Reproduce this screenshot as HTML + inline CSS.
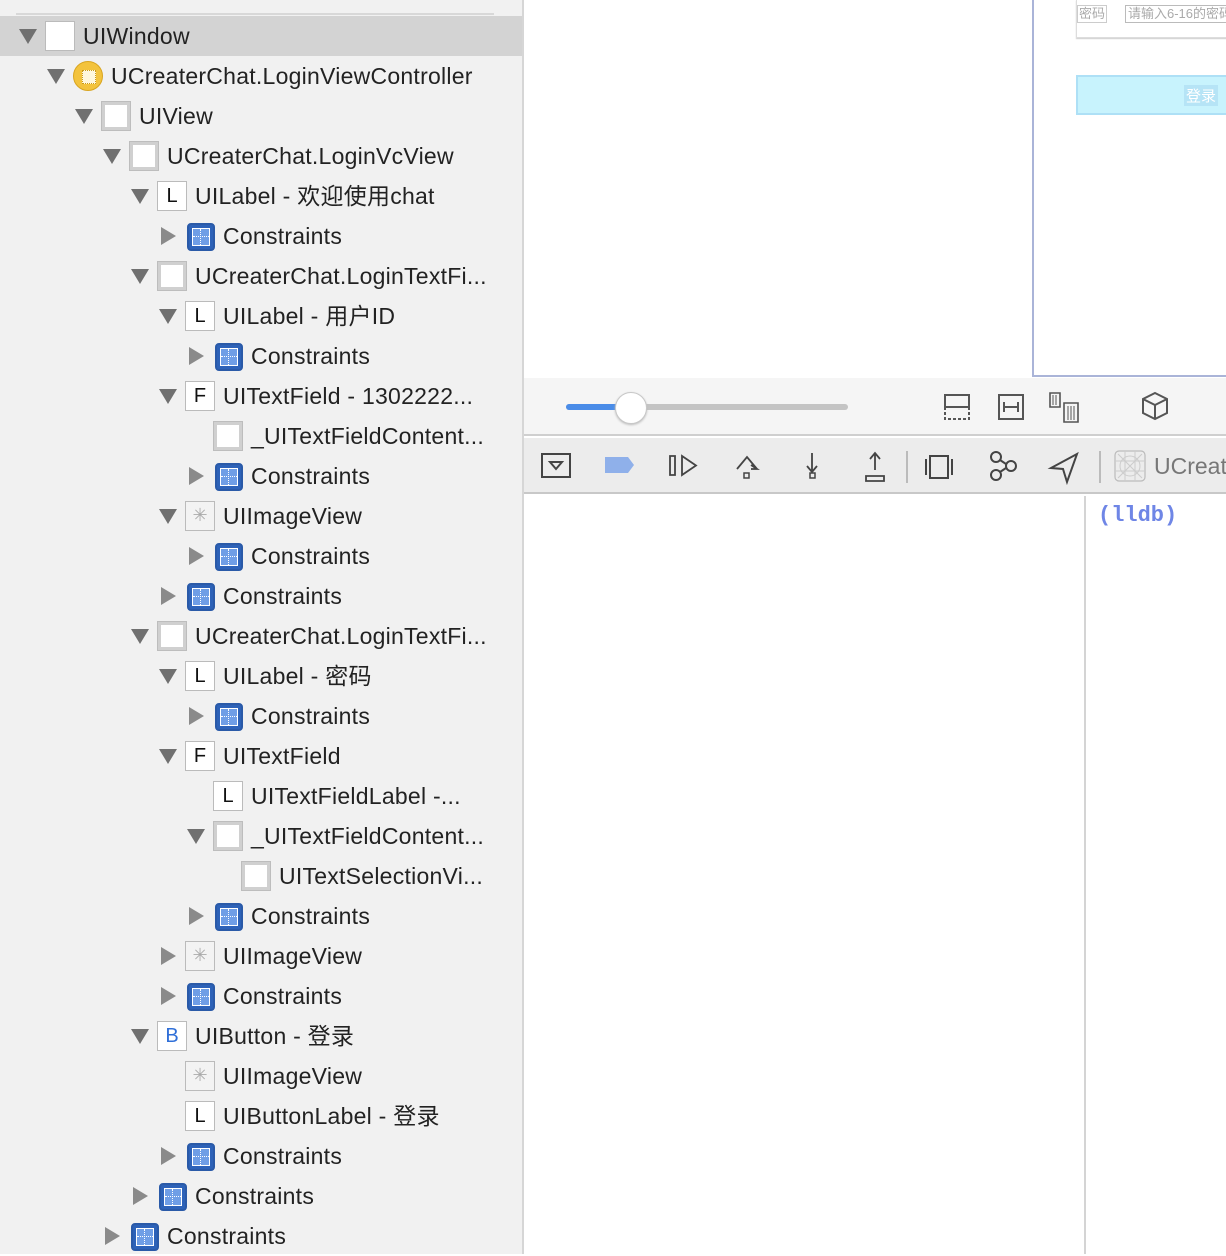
<!DOCTYPE html>
<html><head><meta charset="utf-8"><style>
*{margin:0;padding:0;box-sizing:border-box}
body{width:1226px;height:1254px;overflow:hidden;background:#fff;position:relative;font-family:"Liberation Sans","Noto Sans CJK SC",sans-serif}
#left{position:absolute;left:0;top:0;height:1254px;background:#f1f1f1;border-right:2px solid #d6d6d6;width:524px}
.topline{position:absolute;left:16px;top:13px;width:478px;height:2px;background:#d8d8d8}
.sel{position:absolute;left:0;top:16px;width:522px;height:40px;background:#d3d3d3}
.r{position:absolute;height:40px;font-size:23px;letter-spacing:0.25px;color:#222;white-space:nowrap}
.r .t{position:absolute;left:0;top:12px;width:0;height:0}
.r .t.d{left:-9px;border-left:9px solid transparent;border-right:9px solid transparent;border-top:15px solid #707070;top:13px}
.r .t.rt{left:-7px;top:11px;border-top:9px solid transparent;border-bottom:9px solid transparent;border-left:15px solid #8a8a8a}
.r .i{position:absolute;left:17px;top:5px;width:30px;height:30px;letter-spacing:0}
.r .x{position:absolute;left:55px;top:7px;line-height:26px}
.box{background:#fff;border:1px solid #bbb}
.vw{background:#fff;border:4px solid #d0d0d0;outline:1px solid #bdbdbd;outline-offset:-1px}
.lt{background:#fff;border:1px solid #bbb;font-size:20px;text-align:center;line-height:28px;color:#111}
.cn{left:19px!important;top:7px!important;width:28px!important;height:28px!important;background:#2d62b8;border-radius:4px;border:2px solid #2a5aa8}
.cn:before{content:"";position:absolute;left:3px;top:3px;right:3px;bottom:3px;background:#6f9ee6;border:1px solid #fff}
.cn:after{content:"";position:absolute;left:11px;top:4px;width:0;height:16px;border-left:1px dotted #fff}
.cn i{position:absolute;left:4px;top:11px;width:16px;border-top:1px dotted #fff}
.im{background:#f3f3f3;border:1px solid #bbb;color:#aaa;font-size:18px;text-align:center;line-height:26px}
.vc{background:#f3c33d;border-radius:50%;border:1px solid #d9a520}
.vc:after{content:"";position:absolute;left:8px;top:8px;width:12px;height:12px;background:#fff7dc;border:1px dotted #c99a1a}
#right{position:absolute;left:524px;top:0;width:702px;height:1254px}
</style></head><body>
<div id="left">
<div class="topline"></div>
<div class="sel"></div>

<div class="r" style="left:28px;top:16px"><div class="t d"></div><div class="i box"></div><div class="x">UIWindow</div></div>
<div class="r" style="left:56px;top:56px"><div class="t d"></div><div class="i vc"></div><div class="x">UCreaterChat.LoginViewController</div></div>
<div class="r" style="left:84px;top:96px"><div class="t d"></div><div class="i vw"></div><div class="x">UIView</div></div>
<div class="r" style="left:112px;top:136px"><div class="t d"></div><div class="i vw"></div><div class="x">UCreaterChat.LoginVcView</div></div>
<div class="r" style="left:140px;top:176px"><div class="t d"></div><div class="i lt">L</div><div class="x">UILabel - 欢迎使用chat</div></div>
<div class="r" style="left:168px;top:216px"><div class="t rt"></div><div class="i cn"><i></i></div><div class="x">Constraints</div></div>
<div class="r" style="left:140px;top:256px"><div class="t d"></div><div class="i vw"></div><div class="x">UCreaterChat.LoginTextFi...</div></div>
<div class="r" style="left:168px;top:296px"><div class="t d"></div><div class="i lt">L</div><div class="x">UILabel - 用户ID</div></div>
<div class="r" style="left:196px;top:336px"><div class="t rt"></div><div class="i cn"><i></i></div><div class="x">Constraints</div></div>
<div class="r" style="left:168px;top:376px"><div class="t d"></div><div class="i lt">F</div><div class="x">UITextField - 1302222...</div></div>
<div class="r" style="left:196px;top:416px"><div class="i vw"></div><div class="x">_UITextFieldContent...</div></div>
<div class="r" style="left:196px;top:456px"><div class="t rt"></div><div class="i cn"><i></i></div><div class="x">Constraints</div></div>
<div class="r" style="left:168px;top:496px"><div class="t d"></div><div class="i im">✳</div><div class="x">UIImageView</div></div>
<div class="r" style="left:196px;top:536px"><div class="t rt"></div><div class="i cn"><i></i></div><div class="x">Constraints</div></div>
<div class="r" style="left:168px;top:576px"><div class="t rt"></div><div class="i cn"><i></i></div><div class="x">Constraints</div></div>
<div class="r" style="left:140px;top:616px"><div class="t d"></div><div class="i vw"></div><div class="x">UCreaterChat.LoginTextFi...</div></div>
<div class="r" style="left:168px;top:656px"><div class="t d"></div><div class="i lt">L</div><div class="x">UILabel - 密码</div></div>
<div class="r" style="left:196px;top:696px"><div class="t rt"></div><div class="i cn"><i></i></div><div class="x">Constraints</div></div>
<div class="r" style="left:168px;top:736px"><div class="t d"></div><div class="i lt">F</div><div class="x">UITextField</div></div>
<div class="r" style="left:196px;top:776px"><div class="i lt">L</div><div class="x">UITextFieldLabel -...</div></div>
<div class="r" style="left:196px;top:816px"><div class="t d"></div><div class="i vw"></div><div class="x">_UITextFieldContent...</div></div>
<div class="r" style="left:224px;top:856px"><div class="i vw"></div><div class="x">UITextSelectionVi...</div></div>
<div class="r" style="left:196px;top:896px"><div class="t rt"></div><div class="i cn"><i></i></div><div class="x">Constraints</div></div>
<div class="r" style="left:168px;top:936px"><div class="t rt"></div><div class="i im">✳</div><div class="x">UIImageView</div></div>
<div class="r" style="left:168px;top:976px"><div class="t rt"></div><div class="i cn"><i></i></div><div class="x">Constraints</div></div>
<div class="r" style="left:140px;top:1016px"><div class="t d"></div><div class="i lt" style="color:#2f6fd8">B</div><div class="x">UIButton - 登录</div></div>
<div class="r" style="left:168px;top:1056px"><div class="i im">✳</div><div class="x">UIImageView</div></div>
<div class="r" style="left:168px;top:1096px"><div class="i lt">L</div><div class="x">UIButtonLabel - 登录</div></div>
<div class="r" style="left:168px;top:1136px"><div class="t rt"></div><div class="i cn"><i></i></div><div class="x">Constraints</div></div>
<div class="r" style="left:140px;top:1176px"><div class="t rt"></div><div class="i cn"><i></i></div><div class="x">Constraints</div></div>
<div class="r" style="left:112px;top:1216px"><div class="t rt"></div><div class="i cn"><i></i></div><div class="x">Constraints</div></div>
</div>

<div id="right">
<div style="position:absolute;left:508px;top:0;width:200px;height:377px;border-left:2px solid #aab4d8;border-bottom:2px solid #aab4d8"></div>
<div style="position:absolute;left:552px;top:0;width:160px;height:38px;border:1px solid #ddd;border-top:none;border-right:none;box-shadow:0 1px 1px #ccc"></div>
<div style="position:absolute;left:553px;top:5px;font-size:13px;color:#aaa;border:1px solid #ccc;padding:0 1px;line-height:16px">密码</div>
<div style="position:absolute;left:601px;top:5px;font-size:13px;color:#aaa;border:1px solid #bbb;padding:0 2px;line-height:16px;white-space:nowrap">请输入6-16的密码</div>
<div style="position:absolute;left:552px;top:75px;width:160px;height:40px;background:#c8f3fd;border:2px solid #aee0f6;border-right:none"></div>
<div style="position:absolute;left:660px;top:85px;font-size:15px;color:#fff;background:#b6e4f6;padding:0 2px">登录</div>
<div style="position:absolute;left:0;top:378px;width:702px;height:58px;background:#f5f5f5;border-bottom:2px solid #cfcfcf"></div>
<div style="position:absolute;left:42px;top:404px;width:282px;height:6px;border-radius:3px;background:#c4c4c4"></div>
<div style="position:absolute;left:42px;top:404px;width:70px;height:6px;border-radius:3px;background:#4a8ce8"></div>
<div style="position:absolute;left:91px;top:392px;width:32px;height:32px;border-radius:50%;background:#fff;border:1px solid #c8c8c8;box-shadow:0 1px 2px #bbb"></div>
<svg style="position:absolute;left:400px;top:380px" width="300" height="56" fill="none" stroke="#555" stroke-width="2">
<rect x="21" y="15" width="24" height="12"/><path d="M21 27v12h24V27" stroke-dasharray="3 2"/>
<rect x="75" y="15" width="24" height="24"/><path d="M80 27h14M80 22v10M94 22v10"/>
<path d="M126 13h10v14h-10zM140 23h14v19h-14z" stroke-width="1.6"/><path d="M129 15v10M132 15v10M144 26v14M147 26v14M150 26v14" stroke-width="1"/>
<path d="M231 13l12 6v14l-12 6-12-6V19zM219 19l12 6 12-6M231 25v14"/>
</svg>
<div style="position:absolute;left:0;top:438px;width:702px;height:56px;background:#ececec;border-bottom:2px solid #c8c8c8"></div>
<svg style="position:absolute;left:0;top:438px" width="702" height="56" fill="none" stroke="#444" stroke-width="2">
<rect x="18" y="16" width="28" height="23"/><path d="M26 24h12l-6 7z"/>
<path d="M81 19h23l6 8-6 8H81z" fill="#8fb0ea" stroke="none"/>
<path d="M146 18v19h5V18zM158 18v19l14-9.5z" stroke-width="1.8"/>
<path d="M213 31l10-12 10 12M227 27l6 4-6 0" stroke-width="1.8"/><rect x="220" y="35" width="5" height="5" stroke-width="1.5"/>
<path d="M288 15v19M283 28l5 6 5-6" stroke-width="1.8"/><rect x="286" y="35" width="5" height="5" stroke-width="1.5"/>
<path d="M351 32V15M346 21l5-6 5 6M342 38h18v5h-18z" stroke-width="1.8"/>
<path d="M383 13v32" stroke="#bbb"/>
<rect x="406" y="18" width="18" height="22"/><path d="M402 21v16M428 21v16"/>
<circle cx="472" cy="19" r="5"/><circle cx="472" cy="37" r="5"/><circle cx="487" cy="28" r="5"/><path d="M476 22l6 4M476 34l6-4"/>
<path d="M553 16l-26 14 12 1 4 13z"/>
<path d="M576 13v32" stroke="#bbb"/>
<rect x="591" y="13" width="30" height="30" rx="4" stroke="#bbb" stroke-width="1.2"/><circle cx="606" cy="28" r="10" stroke="#ccc" stroke-width="1"/><path d="M591 23h30M591 33h30M601 13v30M611 13v30M594 16l24 24M618 16l-24 24" stroke="#ccc" stroke-width="1"/>
</svg>
<div style="position:absolute;left:630px;top:453px;font-size:23px;color:#777">UCreat</div>
<div style="position:absolute;left:560px;top:496px;width:2px;height:758px;background:#d4d4d4"></div>
<div style="position:absolute;left:574px;top:503px;font-family:'Liberation Mono',monospace;font-weight:bold;font-size:22px;color:#6f86e6">(lldb)</div>
</div>
</body></html>
